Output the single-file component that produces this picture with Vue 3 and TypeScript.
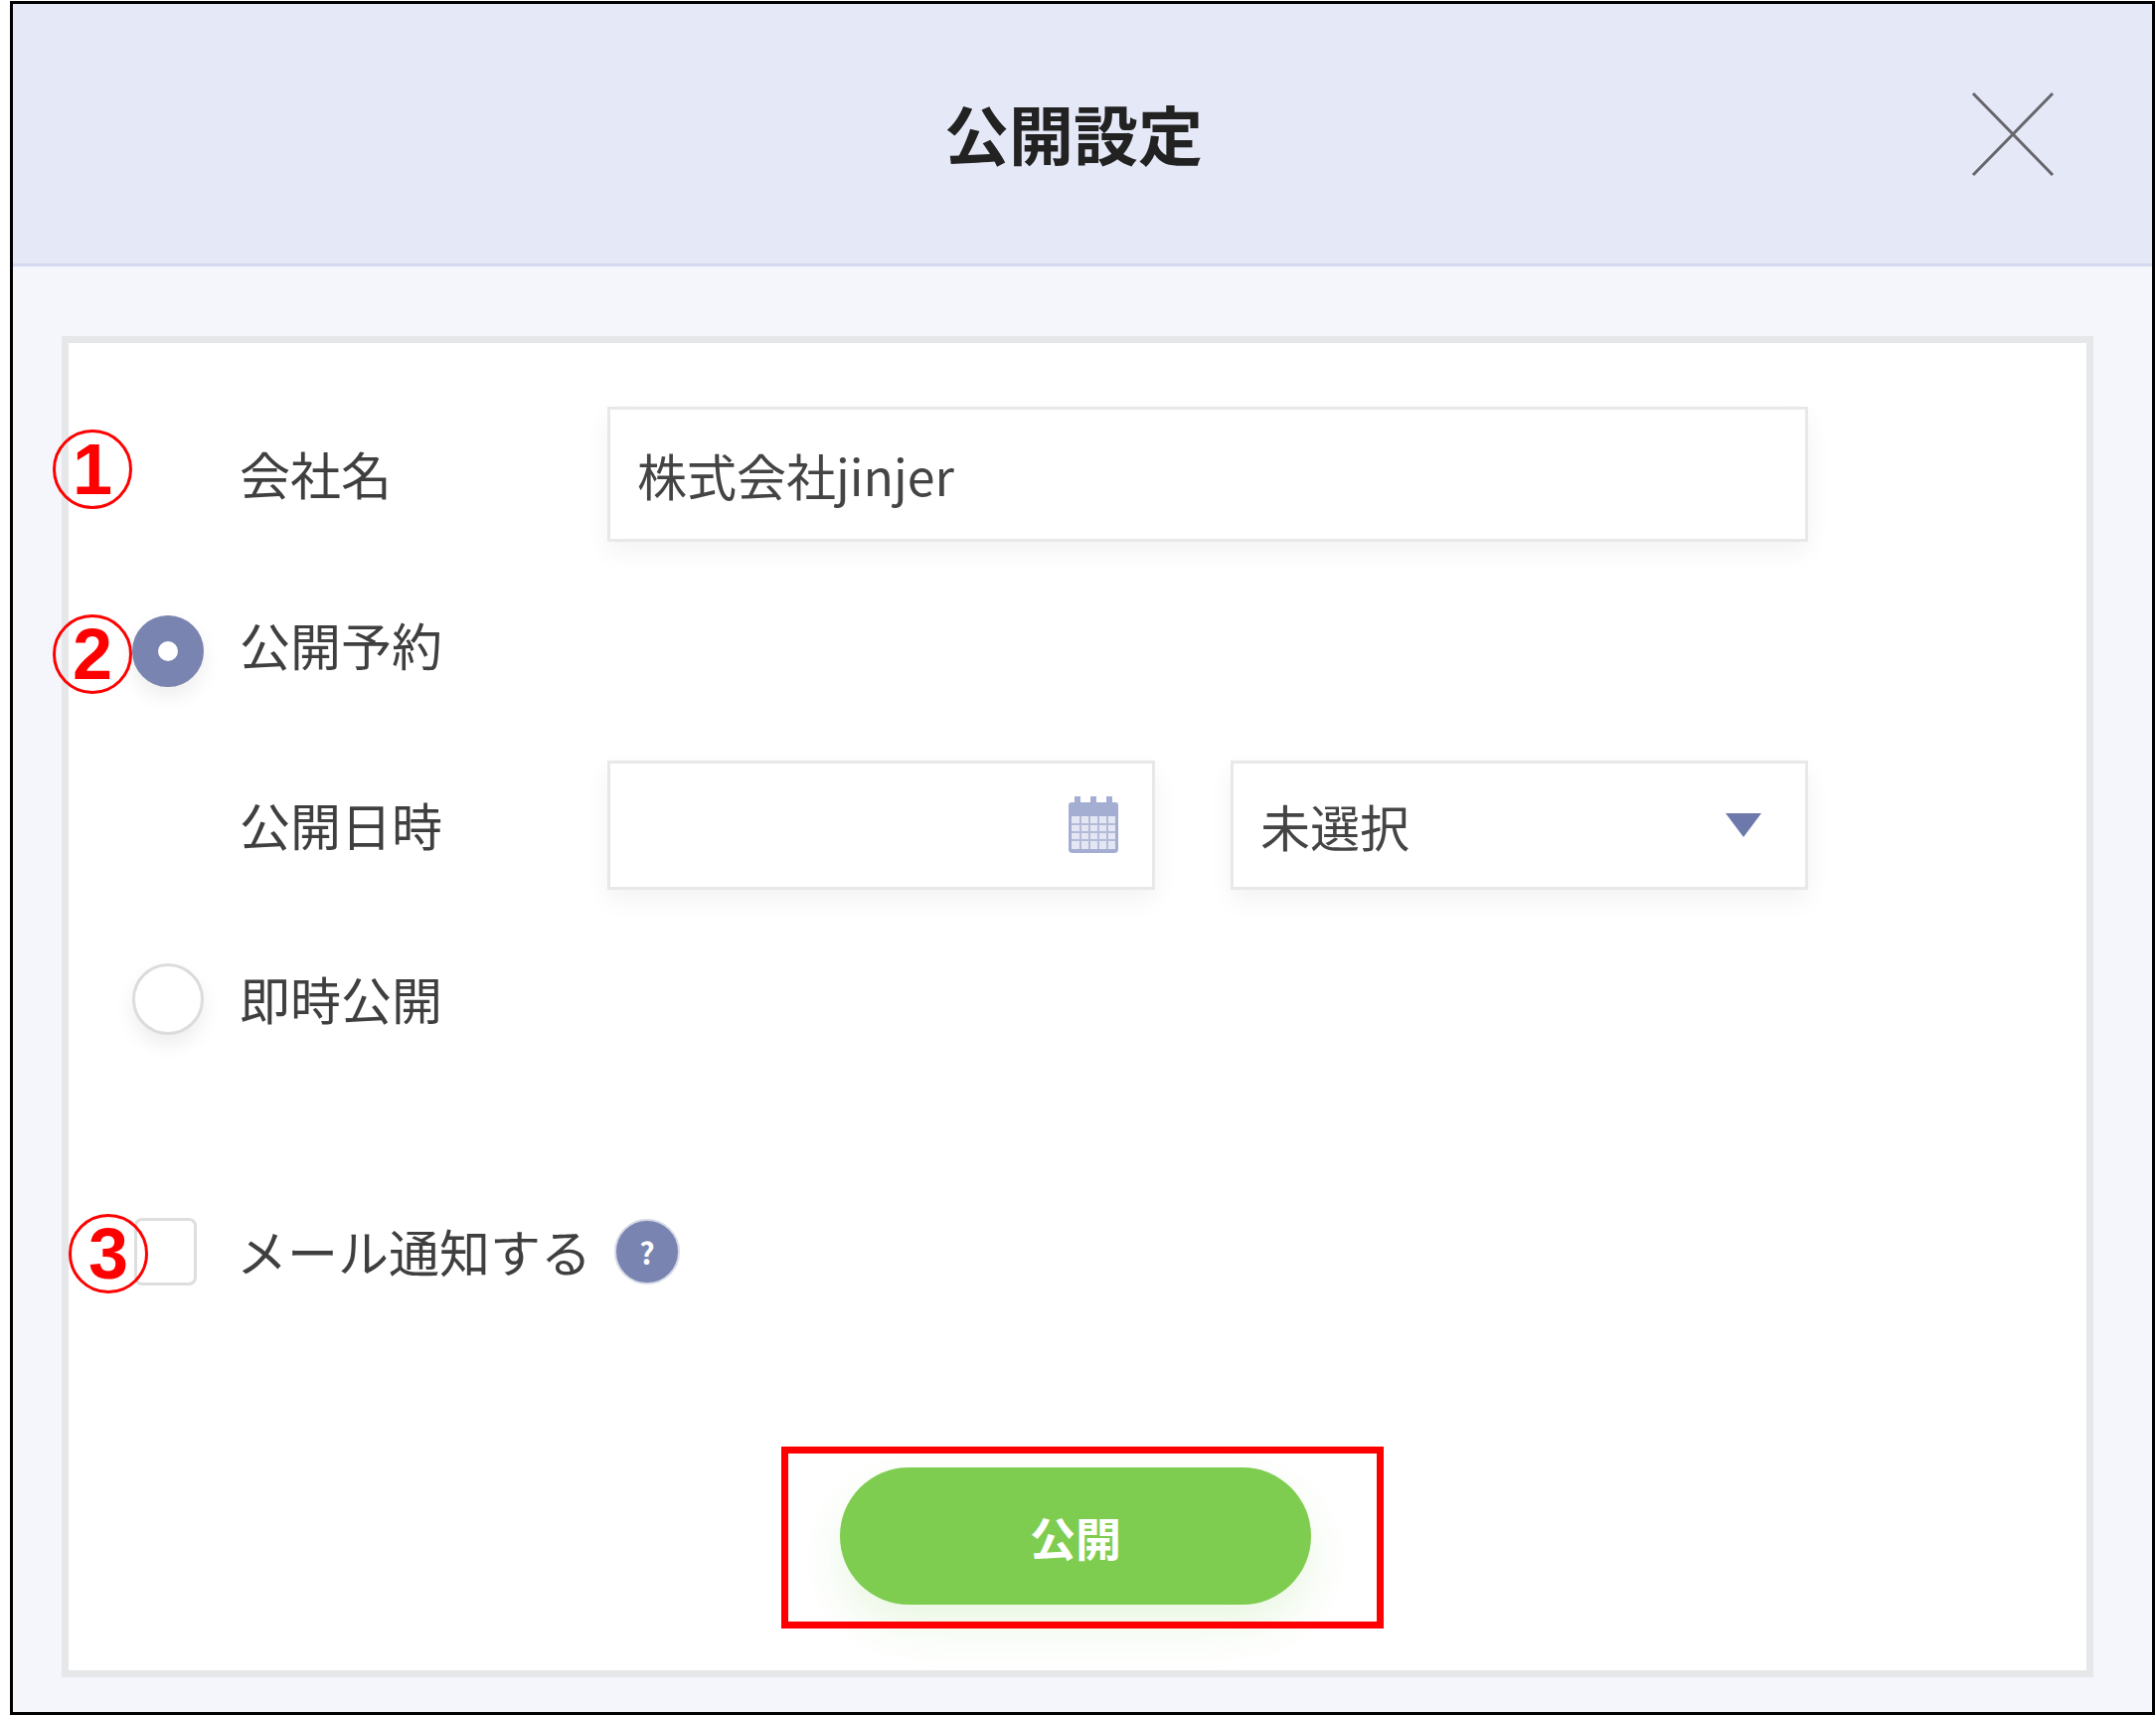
<script setup lang="ts">
const marks = [
  { label: '1', cls: 'mark-one' },
  { label: '2', cls: 'mark-two' },
  { label: '3', cls: 'mark-three' },
]
</script>

<template>
  <div class="frame">
    <header class="head">
      <h1 class="title">公開設定</h1>
      <svg class="close" width="84" height="86" viewBox="0 0 84 86" aria-hidden="true">
        <path d="M2 2 L82 84 M82 2 L2 84" stroke="#66666c" stroke-width="3" fill="none" />
      </svg>
    </header>

    <main class="body">
      <section class="card">
        <div class="row first">
          <label class="label">会社名</label>
          <input class="field wide" value="株式会社jinjer" readonly />
        </div>

        <div class="radio-row reserve">
          <span class="radio on"><span class="dot"></span></span>
          <span class="label up">公開予約</span>
        </div>

        <div class="row date">
          <label class="label">公開日時</label>
          <div class="field picker">
            <svg width="54" height="58" viewBox="0 0 54 58" aria-hidden="true">
              <path d="M2 9 Q2 6 5 6 H49 Q52 6 52 9 V53 Q52 57 48 57 H6 Q2 57 2 53 Z" fill="#a4aed2" />
              <path d="M11 1 V10 M27 1 V10 M43 1 V10" stroke="#a4aed2" stroke-width="6" stroke-linecap="round" />
              <rect x="5" y="20" width="44" height="33" fill="#e4e7f3" />
              <path d="M5 28 H49 M5 36 H49 M5 44 H49 M14 20 V53 M23 20 V53 M32 20 V53 M41 20 V53" stroke="#b3bbd9" stroke-width="2" />
            </svg>
          </div>
          <div class="field select">
            <span>未選択</span>
            <span class="arrow"></span>
          </div>
        </div>

        <div class="radio-row instant">
          <span class="radio"></span>
          <span class="label">即時公開</span>
        </div>

        <div class="check-row">
          <span class="check"></span>
          <span class="label">メール通知する</span>
          <span class="help">?</span>
        </div>

        <div class="actions">
          <button class="publish" type="button">公開</button>
        </div>
      </section>
    </main>

    <!-- annotations drawn over the screenshot -->
    <span v-for="m in marks" :key="m.label" class="mark" :class="m.cls">{{ m.label }}</span>
    <div class="red-box"></div>
  </div>
</template>

<style scoped>
.frame {
  position: relative;
  box-sizing: border-box;
  width: 2158px;
  height: 1724px;
  margin: 1px 0 0 10px;
  border: 3px solid #000;
  background: #f4f6fb;
  font-family: 'Noto Sans CJK JP', 'Liberation Sans', sans-serif;
  color: #3f3f3f;
}

.head {
  box-sizing: border-box;
  height: 264px;
  display: grid;
  grid-template-columns: 1fr auto 1fr;
  align-items: center;
  padding-right: 18px;
  background: #e5e8f6;
  border-bottom: 3px solid #d5d9ef;
}

.title {
  grid-column: 2;
  margin: 0;
  font-size: 65px;
  line-height: 1;
  font-weight: 700;
  color: #222;
  transform: translateY(-1px);
}

.close {
  grid-column: 3;
  justify-self: end;
  margin-right: 80px;
}

.body {
  box-sizing: border-box;
  height: 1454px;
  padding: 70px 59px 35px 49px;
}

.card {
  box-sizing: border-box;
  height: 100%;
  padding-top: 64px;
  background: #fff;
  border: 7px solid #e6e7e9;
}

.label {
  font-size: 51px;
  line-height: 1.2;
  white-space: nowrap;
}

.up {
  transform: translateY(-6px);
}

.row {
  display: flex;
  align-items: center;
  padding-left: 172px;
}

.row .label {
  width: 370px;
  flex: none;
}

.first {
  height: 136px;
}

.date {
  height: 130px;
  margin-top: 74px;
}

.field {
  box-sizing: border-box;
  height: 100%;
  background: #fff;
  border: 3px solid #e8e8ea;
  box-shadow: 0 10px 24px rgba(0, 0, 0, 0.05);
}

.wide {
  width: 1208px;
  padding: 0 27px;
  font: inherit;
  font-size: 50px;
  color: #444;
  outline: none;
}

.picker {
  width: 551px;
  display: flex;
  align-items: center;
  justify-content: flex-end;
  padding-right: 32px;
}

.select {
  width: 581px;
  margin-left: 76px;
  display: flex;
  align-items: center;
  justify-content: space-between;
  padding: 0 44px 0 27px;
  font-size: 50px;
  color: #444;
}

.arrow {
  width: 0;
  height: 0;
  border-left: 18px solid transparent;
  border-right: 18px solid transparent;
  border-top: 24px solid #6e79ab;
}

.radio-row {
  display: flex;
  align-items: center;
  gap: 36px;
  height: 72px;
  padding-left: 64px;
}

.reserve {
  margin-top: 74px;
}

.instant {
  margin-top: 74px;
}

.radio {
  box-sizing: border-box;
  width: 72px;
  height: 72px;
  flex: none;
  display: flex;
  align-items: center;
  justify-content: center;
  border-radius: 50%;
  background: #fff;
  border: 3px solid #dcdcdc;
  box-shadow: 0 10px 20px rgba(0, 0, 0, 0.07);
}

.radio.on {
  background: #7a84b0;
  border-color: #7a84b0;
}

.dot {
  width: 20px;
  height: 20px;
  border-radius: 50%;
  background: #fff;
}

.check-row {
  display: flex;
  align-items: center;
  height: 68px;
  margin-top: 184px;
  padding-left: 66px;
}

.check {
  box-sizing: border-box;
  width: 63px;
  height: 68px;
  flex: none;
  border: 3px solid #dedede;
  border-radius: 8px;
  background: #fff;
  margin-right: 40px;
}

.help {
  width: 66px;
  height: 66px;
  margin-left: 23px;
  flex: none;
  display: flex;
  align-items: center;
  justify-content: center;
  border-radius: 50%;
  background: #7a84b0;
  border: 2px solid #d5d8e6;
  box-sizing: border-box;
  color: #fff;
  font-size: 30px;
  font-weight: 700;
}

.actions {
  display: flex;
  justify-content: center;
  margin-top: 183px;
  padding-right: 4px;
}

.publish {
  width: 474px;
  height: 138px;
  padding: 0;
  border: none;
  border-radius: 69px;
  background: #7fcd50;
  box-shadow: 0 22px 44px rgba(127, 205, 80, 0.16);
  color: #fff;
  font: inherit;
  font-size: 46px;
  font-weight: 700;
}

.mark {
  position: absolute;
  box-sizing: border-box;
  width: 80px;
  height: 80px;
  left: 40px;
  display: flex;
  align-items: center;
  justify-content: center;
  border: 3px solid #f00;
  border-radius: 50%;
  color: #f00;
  font-family: 'Liberation Sans', sans-serif;
  font-size: 72px;
  font-weight: 700;
  line-height: 1;
}

.mark-one {
  top: 428px;
}

.mark-two {
  top: 614px;
}

.mark-three {
  top: 1217px;
  left: 56px;
}

.red-box {
  position: absolute;
  box-sizing: border-box;
  left: 773px;
  top: 1451px;
  width: 606px;
  height: 183px;
  border: 7px solid #f00;
}
</style>

<style>
html,
body {
  background: #fff;
}
</style>
